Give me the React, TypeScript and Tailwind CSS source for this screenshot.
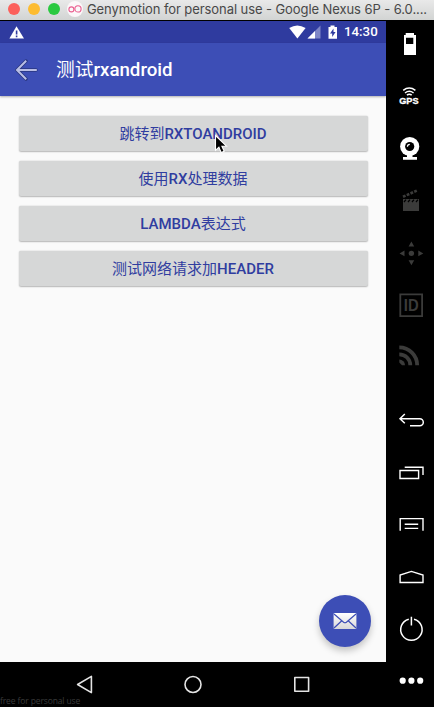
import React from "react";

type Part = { text: string; cjk?: boolean };

const buttons: Part[][] = [
  [{ text: "跳转到", cjk: true }, { text: "RXTOANDROID" }],
  [{ text: "使用", cjk: true }, { text: "RX" }, { text: "处理数据", cjk: true }],
  [{ text: "LAMBDA" }, { text: "表达式", cjk: true }],
  [{ text: "测试网络请求加", cjk: true }, { text: "HEADER" }],
];

function Label({ parts }: { parts: Part[] }) {
  return (
    <>
      {parts.map((p) => (
        <span key={p.text} className={p.cjk ? "font-normal" : "font-medium"}>
          {p.text}
        </span>
      ))}
    </>
  );
}

function Tool({ children, className = "text-white" }: { children: React.ReactNode; className?: string }) {
  return (
    <svg width="48" height="52" viewBox="0 0 48 52" fill="none" className={`block shrink-0 ${className}`}>
      {children}
    </svg>
  );
}

function TitleBar() {
  return (
    <header className="flex h-5 shrink-0 items-center bg-gradient-to-b from-[#e9e9e9] to-[#d2d4d3] pb-0.5 pl-2">
      <div className="flex gap-2">
        <i className="size-3 rounded-full bg-[#fc605b]" />
        <i className="size-3 rounded-full bg-[#fdbc30]" />
        <i className="size-3 rounded-full bg-[#2ac940]" />
      </div>
      <svg width="16" height="16" viewBox="0 0 16 16" fill="none" className="ml-[7px] shrink-0">
        <circle cx="8" cy="8" r="8" fill="#fbf8f9" />
        <g stroke="#ea5f90" strokeWidth="1.1">
          <circle cx="4.4" cy="8.4" r="2.5" />
          <circle cx="11" cy="7.9" r="3.1" />
        </g>
      </svg>
      <span className="ml-[4px] whitespace-nowrap font-['Inter','Liberation_Sans',sans-serif] text-[13px] leading-4 tracking-[-0.08px] text-[#484848]">
        Genymotion for personal use - Google Nexus 6P - 6.0....
      </span>
    </header>
  );
}

function StatusBar() {
  return (
    <div className="flex h-[22px] shrink-0 items-center bg-[#2f3b9f] text-white">
      <svg width="16" height="22" viewBox="0 0 16 22" className="ml-[9px]">
        <path d="M7.5 5.2 15 17.5H.4Z" fill="#fff" />
        <path d="M6.8 9.5h1.6v4H6.8zM6.8 14.6h1.6v1.6H6.8z" fill="#2f3b9f" />
      </svg>
      <svg width="54" height="22" viewBox="0 0 54 22" className="ml-auto">
        <path d="M1.2 7Q9.2 1.9 17.6 7L9.4 17.5Z" fill="#fff" />
        <path d="M32.5 4.5V17.5H19.5Z" fill="#7e86c7" />
        <path d="M27 10v7.5h-7.5Z" fill="#fff" />
        <path d="M40.5 6h2V4.5h4V6h2.5v11.8h-8.5Z" fill="#fff" />
        <path d="m45.5 7.5-3.5 5h2.2v3.5l3.4-5h-2.1z" fill="#2f3b9f" />
      </svg>
      <span className="ml-[2px] mr-[8px] w-[34px] whitespace-nowrap text-[13.3px] font-medium leading-[22px]">14:30</span>
    </div>
  );
}

function Sidebar() {
  return (
    <aside className="flex w-12 shrink-0 flex-col justify-between bg-black">
      <div>
        <Tool>
          <path fill="currentColor" fillRule="evenodd" d="M19.7 13H28v2h2v20H18V15h1.7ZM20 17.7V24h7.3v-6.3Z" />
        </Tool>
        <Tool>
          <g stroke="currentColor" strokeWidth="1.5">
            <path d="M17.2 18.4q6-4.6 12.2 0M19 21q4.3-3.3 8.6 0M20.9 23.2q2.4-1.9 4.8 0" />
          </g>
          <text x="13.2" y="32.2" textLength="19.4" lengthAdjust="spacingAndGlyphs" fill="currentColor" stroke="currentColor" strokeWidth=".3" className="font-['Liberation_Sans',sans-serif] text-[9px] font-bold">
            GPS
          </text>
        </Tool>
        <Tool>
          <circle cx="23.7" cy="22.5" r="9.6" fill="currentColor" />
          <circle cx="23.7" cy="22.5" r="4.6" fill="#000" />
          <path d="M21.4 22.8a2.4 2.4 0 0 1 2.4-2.4" stroke="currentColor" strokeWidth="1.2" />
          <path d="M21 31h5.5v2H31v2.8H17V33h4Z" fill="currentColor" />
        </Tool>
        <Tool className="text-[#3b3b3a]">
          <path d="M17 23h16v12H17Z" fill="currentColor" />
          <path d="m18 26 2-2.4M22 26l2-2.4M26 26l2-2.4M30 26l2-2.4" stroke="#000" strokeWidth="1.3" />
          <path d="M17 20.8 30.8 14.6" stroke="currentColor" strokeWidth="2.6" strokeDasharray="2.8 1.3" />
        </Tool>
        <Tool className="text-[#3b3b3a]">
          <circle cx="25.4" cy="25.4" r="2.7" fill="currentColor" />
          <path fill="currentColor" d="m25.4 13.5 2.8 5h-5.6zM25.4 37.3l2.8-5h-5.6zM13.5 25.4l5-2.8v5.6zM37.3 25.4l-5-2.8v5.6z" />
        </Tool>
        <Tool className="text-[#3b3b3a]">
          <path d="M14.3 14.3h21.8v21.8H14.3Z" stroke="currentColor" strokeWidth="1.8" />
          <text x="17.8" y="31" textLength="14.8" lengthAdjust="spacingAndGlyphs" fill="currentColor" className="font-['Liberation_Sans',sans-serif] text-[16px] font-bold">
            ID
          </text>
        </Tool>
        <Tool className="text-[#3b3b3a]">
          <path d="M13.3 15.4A17.9 17.9 0 0 1 31.2 33.3M13.3 22.3A11 11 0 0 1 24.3 33.3" stroke="currentColor" strokeWidth="3.8" />
          <path d="M13.3 27.6a5.7 5.7 0 0 1 5.7 5.7h-3l-2.7-2.7Z" fill="currentColor" />
        </Tool>
      </div>
      <div>
        <Tool>
          <path d="M18.8 19 14 23.7l4.8 4.6M14 23.7h19.8a3.5 3.5 0 0 1 0 7H24" stroke="currentColor" strokeWidth="1.5" />
        </Tool>
        <Tool>
          <path d="M18.7 20.2H37V28M14 23.5h18.6v8H14Z" stroke="currentColor" strokeWidth="1.4" />
        </Tool>
        <Tool>
          <path d="M14.2 31.7V19.6H37v12.1M18.7 25.2h13.5M18.7 29.4h13.5" stroke="currentColor" strokeWidth="1.4" />
        </Tool>
        <Tool>
          <path d="M14.1 31.5v-7.4l11.3-3.7L37 24.1v7.4Z" stroke="currentColor" strokeWidth="1.4" />
        </Tool>
        <Tool>
          <path d="M22.8 16.2a10.7 10.7 0 1 0 5.2 0M25.4 13.7v8.8" stroke="currentColor" strokeWidth="1.5" />
        </Tool>
        <Tool>
          <g fill="currentColor">
            <circle cx="16.7" cy="25.7" r="3.1" />
            <circle cx="25.4" cy="25.7" r="3.1" />
            <circle cx="34.2" cy="25.7" r="3.1" />
          </g>
        </Tool>
      </div>
    </aside>
  );
}

export default function App() {
  return (
    <div className="flex h-[707px] w-[434px] flex-col overflow-hidden bg-black font-['Roboto','Noto_Sans_CJK_SC',sans-serif]">
      <TitleBar />
      <div className="flex min-h-0 flex-1">
        <div className="relative flex w-[386px] flex-col pt-px">
          <StatusBar />
          <div className="z-10 flex h-[53px] shrink-0 items-center bg-[#3d4eb6] shadow-[0_1px_2px_rgba(0,0,0,0.3)]">
            <svg width="24" height="24" viewBox="0 0 24 24" fill="none" className="ml-[15px]">
              <path d="M21 12H2.5M11 3 2 12l9 9" stroke="#29367f" strokeWidth="3.4" strokeLinecap="round" />
              <path d="M21.8 12H2.5M11.2 2.8 2 12l9.2 9.2" stroke="#b9bee5" strokeWidth="2" />
            </svg>
            <h1 className="ml-[17px] whitespace-nowrap pt-px text-[18.7px] leading-6 text-white">
              <Label parts={[{ text: "测试", cjk: true }, { text: "rxandroid" }]} />
            </h1>
          </div>
          <main className="flex flex-1 flex-col gap-2.5 bg-[#fafafa] px-[18.5px] pt-5">
            {buttons.map((parts) => (
              <button
                key={parts[0].text}
                className="flex h-[35px] w-full items-center justify-center whitespace-nowrap rounded-[2px] bg-[#d6d7d7] pt-px text-[15px] leading-5 text-[#303da0] shadow-[0_0.5px_1.5px_rgba(0,0,0,0.28)]"
              >
                <span>
                  <Label parts={parts} />
                </span>
              </button>
            ))}
          </main>
          <svg width="14" height="22" viewBox="0 0 14 22" className="absolute left-[214px] top-[114px] z-20">
            <path d="M1.5 1.5v14.8l3.4-3.1 2.3 5.4 3-1.3-2.3-5.1h4.6Z" fill="#000" stroke="#fff" strokeWidth="1.1" />
          </svg>
          <button className="absolute bottom-[60px] right-[15px] flex size-[52.4px] items-center justify-center rounded-full bg-[#3d4eb6] shadow-[0_4px_7px_rgba(0,0,0,0.22)]">
            <svg width="24" height="18" viewBox="0 0 24 18">
              <defs>
                <linearGradient id="paper" x1="0" y1="0" x2="0" y2="1">
                  <stop offset="0" stopColor="#fff" />
                  <stop offset="1" stopColor="#d7d7d9" />
                </linearGradient>
              </defs>
              <rect x=".6" y="1" width="22.8" height="16" rx="1" fill="url(#paper)" />
              <path d="m1 2 9.6 8.2q1.4 1.1 2.8 0L23 2M1 16l7.8-7.2M23 16l-7.8-7.2" fill="none" stroke="#3d4eb6" strokeWidth="1.2" />
            </svg>
          </button>
          <nav className="flex h-[45px] shrink-0 bg-black px-[31px]">
            {["M77.6 22.5 91.4 14.4v16.2Z", "M185 22.5a8 8 0 1 0 16 0a8 8 0 1 0-16 0Z", "M294.8 15.5h13.8v13.8h-13.8Z"].map((d, i) => (
              <svg key={d} width="108" height="45" viewBox={`${31 + i * 108} 0 108 45`}>
                <path d={d} fill="none" stroke="#e4e4e4" strokeWidth="1.6" strokeLinejoin="round" />
              </svg>
            ))}
          </nav>
          <span className="absolute bottom-0 left-0 whitespace-nowrap font-['Open_Sans',sans-serif] text-[8.5px] leading-3 tracking-[-0.12px] text-[#3a3a3a]">
            free for personal use
          </span>
        </div>
        <Sidebar />
      </div>
    </div>
  );
}
